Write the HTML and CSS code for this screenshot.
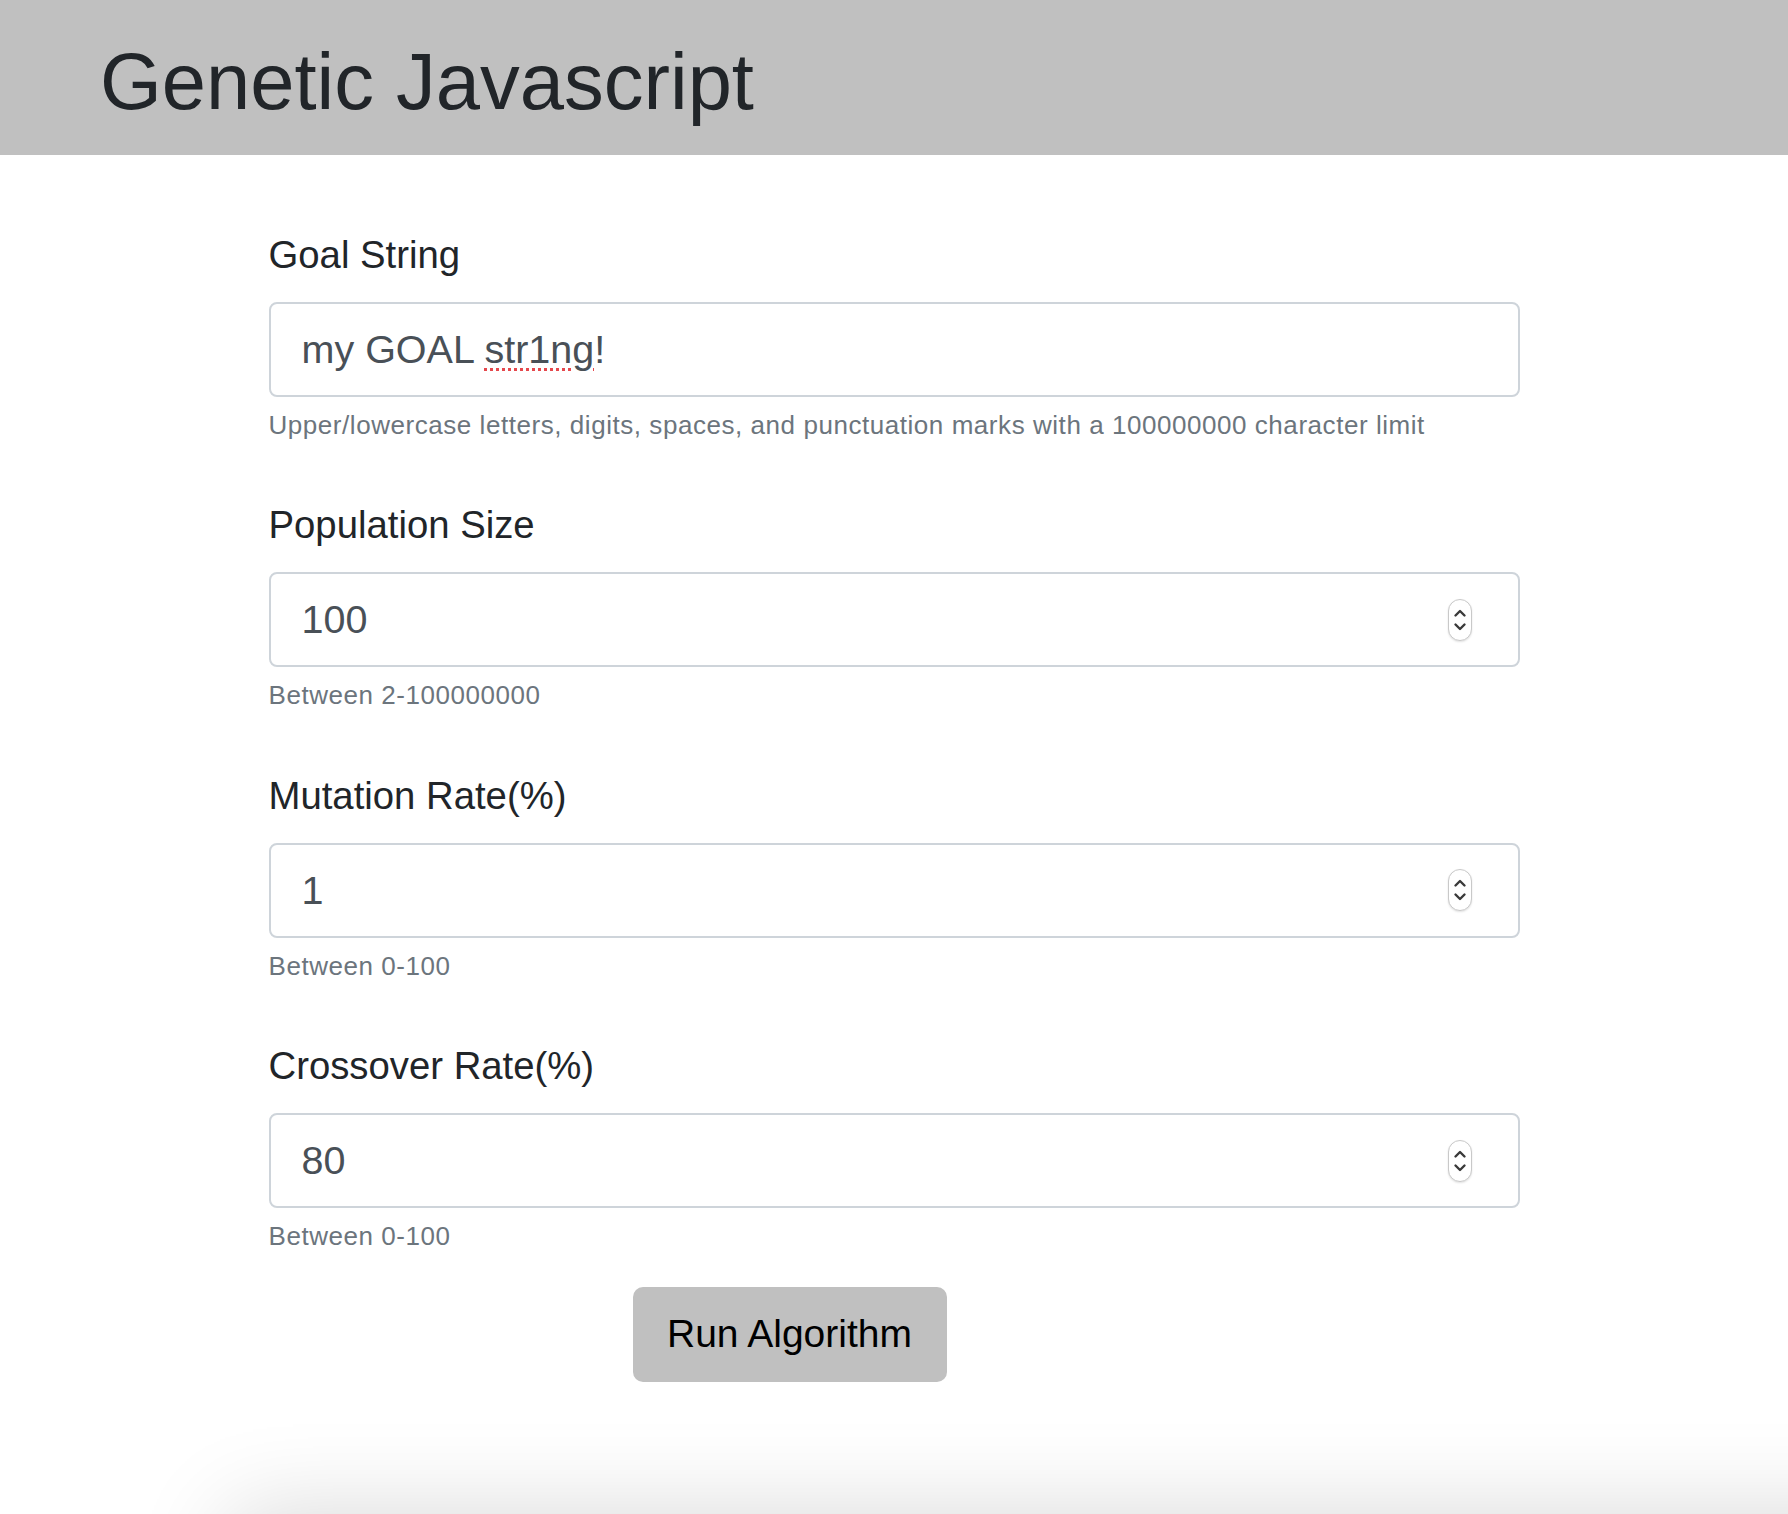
FILE: index.html
```html
<!DOCTYPE html>
<html lang="en">
<head>
<meta charset="utf-8">
<title>Genetic Javascript</title>
<link rel="stylesheet" href="styles.css">
</head>
<body>
<header class="masthead">
  <h1 class="title">Genetic Javascript</h1>
</header>

<main class="form-wrap">
  <div class="group">
    <label class="label">Goal String</label>
    <div class="field">
      <span class="value">my GOAL <span class="misspelled">str1ng</span>!</span>
    </div>
    <small class="help">Upper/lowercase letters, digits, spaces, and punctuation marks with a 100000000 character limit</small>
  </div>

  <div class="group">
    <label class="label">Population Size</label>
    <div class="field">
      <span class="value">100</span>
      <span class="spinner">
        <svg width="24" height="42" viewBox="0 0 24 42"><path d="M7.5 16.5 L12 12 L16.5 16.5" /><path d="M7.5 25.5 L12 30 L16.5 25.5" /></svg>
      </span>
    </div>
    <small class="help">Between 2-100000000</small>
  </div>

  <div class="group">
    <label class="label">Mutation Rate(%)</label>
    <div class="field">
      <span class="value">1</span>
      <span class="spinner">
        <svg width="24" height="42" viewBox="0 0 24 42"><path d="M7.5 16.5 L12 12 L16.5 16.5" /><path d="M7.5 25.5 L12 30 L16.5 25.5" /></svg>
      </span>
    </div>
    <small class="help">Between 0-100</small>
  </div>

  <div class="group last">
    <label class="label">Crossover Rate(%)</label>
    <div class="field">
      <span class="value">80</span>
      <span class="spinner">
        <svg width="24" height="42" viewBox="0 0 24 42"><path d="M7.5 16.5 L12 12 L16.5 16.5" /><path d="M7.5 25.5 L12 30 L16.5 25.5" /></svg>
      </span>
    </div>
    <small class="help">Between 0-100</small>
  </div>

  <div class="actions">
    <button class="run-btn" type="button">Run Algorithm</button>
  </div>
</main>

<section class="results"></section>
</body>
</html>
```

FILE: styles.css
```css
html, body {
  margin: 0;
  padding: 0;
  overflow-x: hidden;
  background: #ffffff;
}

body {
  font-family: "Liberation Sans", Arial, sans-serif;
  color: #212529;
}

.masthead {
  background: #c0c0c0;
  height: 155px;
  box-sizing: border-box;
  padding: 34px 0 0 100px;
}

.title {
  margin: 0;
  font-family: "Liberation Sans", Arial, sans-serif;
  font-weight: 400;
  font-size: 79.5px;
  line-height: 96px;
  color: #212529;
}

.form-wrap {
  width: 1251px;
  margin: 0 auto;
  padding-top: 70px;
}

.group {
  display: flex;
  flex-direction: column;
  margin-bottom: 51px;
}

.group.last {
  margin-bottom: 31px;
}

.label {
  display: block;
  font-size: 38.3px;
  line-height: 60px;
  color: #212529;
  margin-bottom: 17px;
}

.field {
  height: 95px;
  box-sizing: border-box;
  border: 2px solid #ced4da;
  border-radius: 8px;
  display: flex;
  align-items: center;
  justify-content: space-between;
  padding: 0 46px 0 31px;
  background: #fff;
}

.value {
  font-size: 39.5px;
  color: #495057;
  line-height: 1;
}

.misspelled {
  text-decoration: underline dotted #e5484d;
  text-decoration-thickness: 3px;
  text-underline-offset: 5px;
}

.spinner {
  display: flex;
  width: 24px;
  height: 42px;
  box-sizing: border-box;
  border: 1px solid #c9c9c9;
  border-radius: 12px;
  box-shadow: 0 1px 2px rgba(0,0,0,0.12);
  background: #fff;
  overflow: hidden;
}

.spinner svg {
  display: block;
  margin: -1px;
  fill: none;
  stroke: #3a3a3a;
  stroke-width: 2.4;
  stroke-linecap: round;
  stroke-linejoin: round;
}

.help {
  display: block;
  margin-top: 9px;
  font-size: 26px;
  letter-spacing: 0.55px;
  line-height: 38.4px;
  color: #6c757d;
}

.actions {
  display: flex;
  padding-left: 364px;
}

.run-btn {
  width: 314px;
  height: 95px;
  border: none;
  border-radius: 10px;
  background: #c0c0c0;
  color: #000;
  font-family: "Liberation Sans", Arial, sans-serif;
  font-size: 39px;
  padding: 0;
  cursor: pointer;
}

.results {
  margin: 133px -200px 0 230px;
  height: 600px;
  background: #fff;
  box-shadow: 0 0 90px rgba(0, 0, 0, 0.16);
}
```
